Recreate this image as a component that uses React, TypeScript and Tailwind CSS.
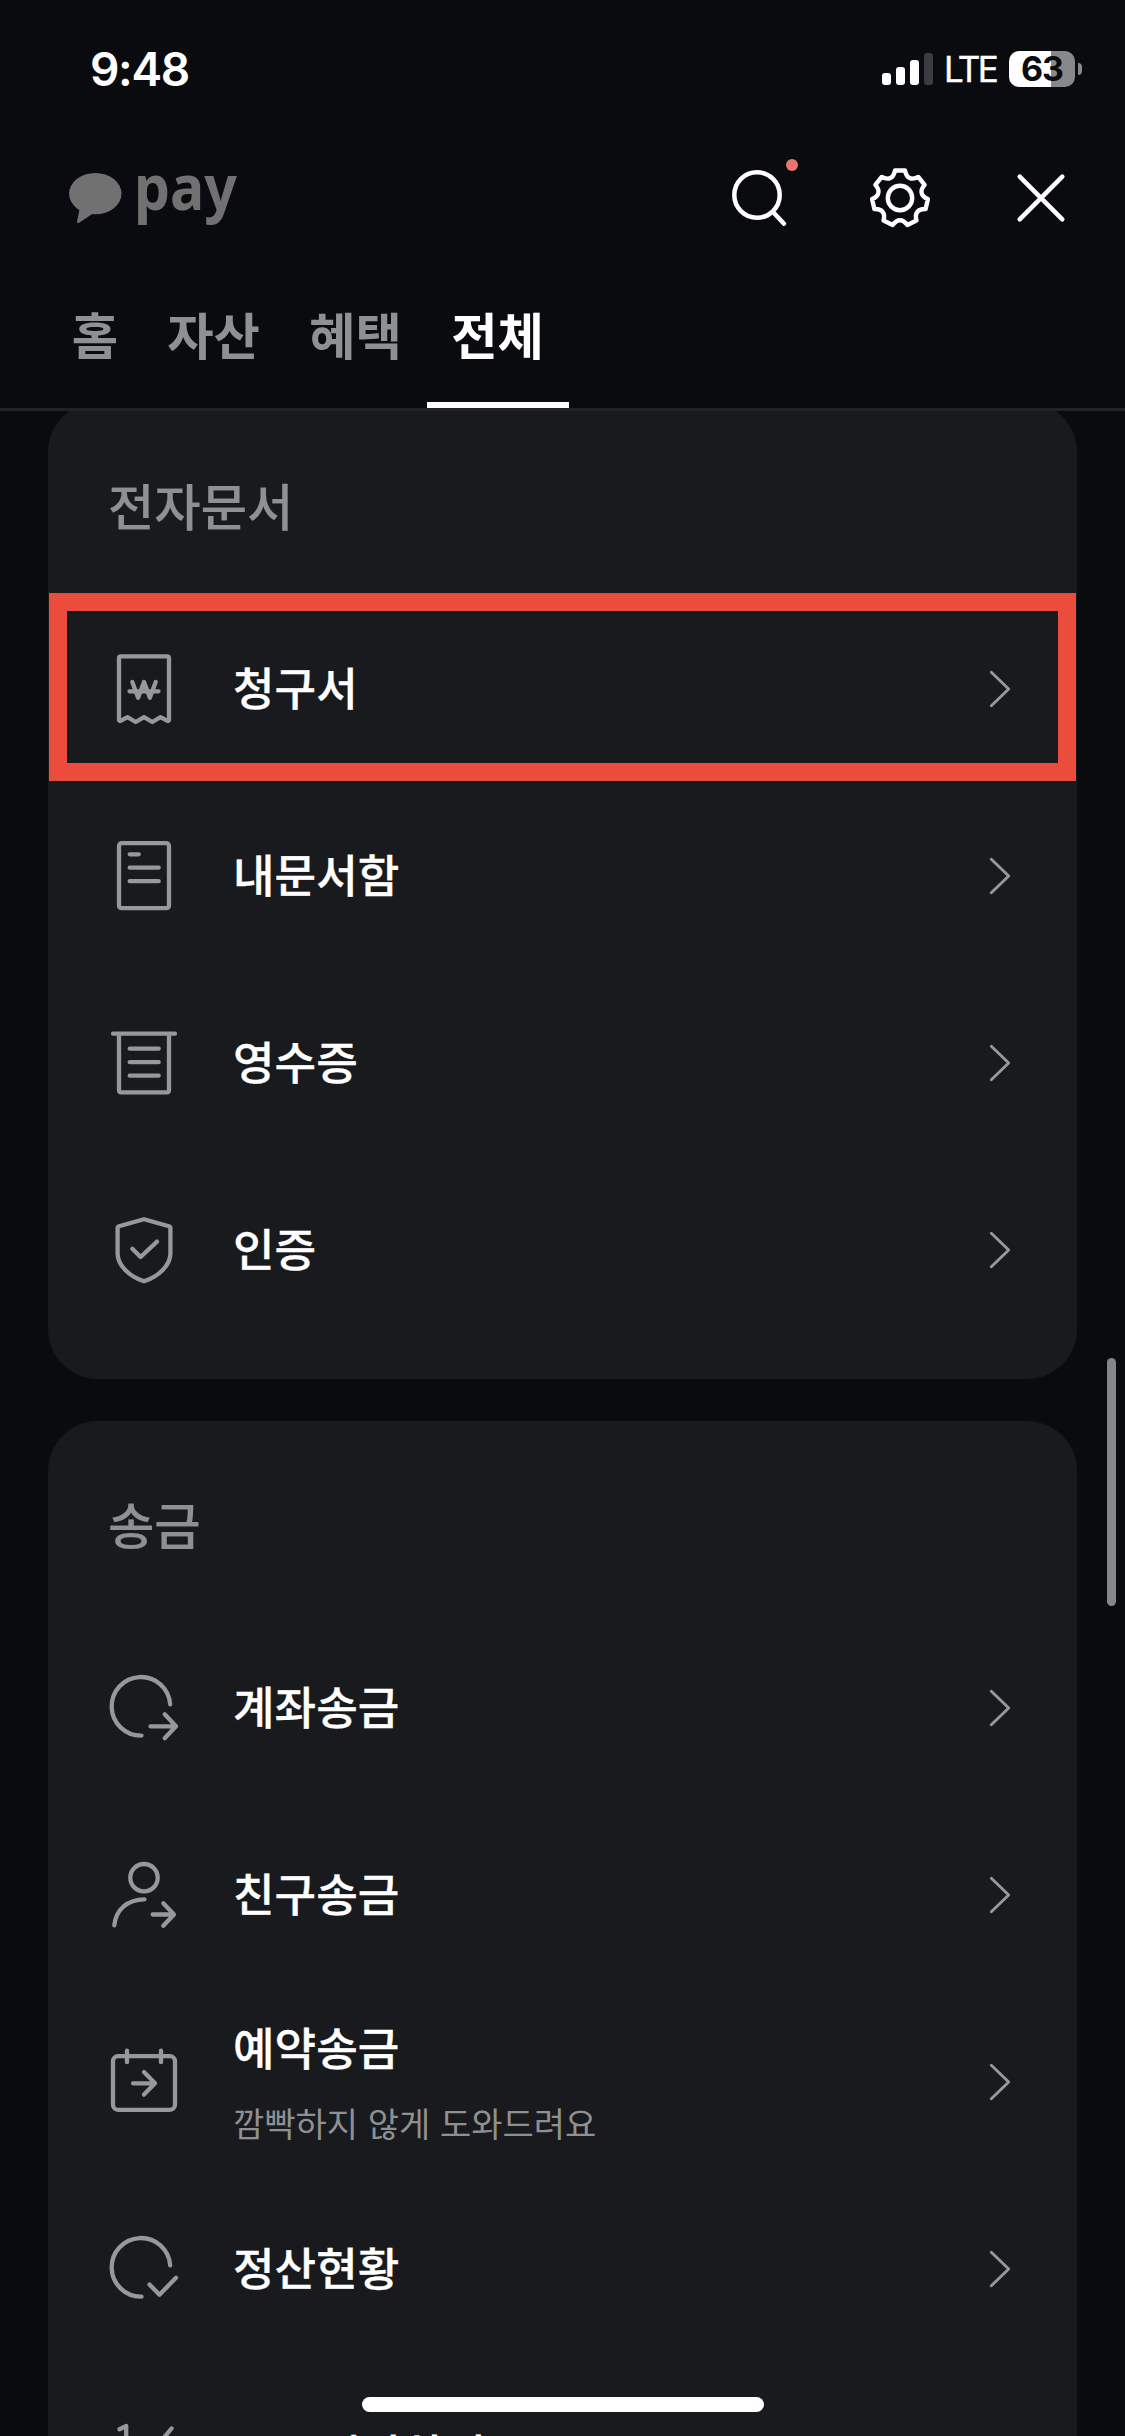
import type { ReactNode } from "react";

const kr = "font-['Noto_Sans_CJK_KR',sans-serif]";

/* Line icons share a 84x85 box whose origin is the middle of the row. */
function LineIcon({ children }: { children: ReactNode }) {
  return (
    <svg
      className="h-[85px] w-[84px] shrink-0"
      viewBox="-42 -43 84 85"
      fill="none"
      stroke="#97989a"
      strokeWidth="4.3"
      strokeLinecap="round"
      strokeLinejoin="round"
    >
      {children}
    </svg>
  );
}

const icons: Record<string, ReactNode> = {
  bill: (
    <>
      <path d="M-25 31V-30.7Q-25 -32.7 -23 -32.7H23Q25 -32.7 25 -30.7V31Q24.600 32.400 23 31.700L16.500 28.200L8.300 33L0 28.200L-8.300 33L-16.500 28.200L-23 31.700Q-24.600 32.400 -25 31Z" />
      <path d="M-11.700 -7L-5.900 8.700L0 -7L5.900 8.700L11.700 -7M-14.500 2.300H-8M14.500 2.300H8M-8 2.300H8" />
    </>
  ),
  doc: (
    <>
      <rect x="-25" y="-32.800" width="50" height="65" rx="2.800" />
      <path d="M-14.300 -21.700H-5.200M-14.300 -8.300H14.700M-14.300 5.200H14.700" />
    </>
  ),
  receipt: (
    <>
      <path d="M-31 -29.300H31M-25 -29V27.300Q-25 29.300 -23 29.300H23Q25 29.300 25 27.300V-29" />
      <path d="M-14.300 -14.300H14.700M-14.300 -0.800H14.700M-14.300 12.700H14.700" />
    </>
  ),
  shield: (
    <>
      <path d="M0 -30.800L25 -23.700Q26.400 -23.200 26.400 -21.800V3.500C26.400 15.500 14.500 26.500 0.800 31Q0 31.200 -0.800 31C-14.500 26.500 -26.400 15.500 -26.400 3.500V-21.800Q-26.400 -23.200 -25 -23.700Z" />
      <path d="M-11.700 -1.300L-3.400 7L13 -8.400" />
    </>
  ),
  send: (
    <g transform="translate(0 1)">
      <path d="M26.200 -4.700A29.300 29.300 0 1 0 -2.500 26.600" />
      <path d="M6.500 17.300H31.500M20.700 5.300L32 17.300L20.700 29.300" />
    </g>
  ),
  friend: (
    <g transform="translate(0 1)">
      <circle cx="0" cy="-18.300" r="13.700" />
      <path d="M0.500 3.300C-16.500 3.300 -28 13.500 -29.700 29.300" />
      <path d="M8.700 18.500H29.500M19.300 7.300L30 18.500L19.300 29.800" />
    </g>
  ),
  calendar: (
    <g transform="translate(0 1)">
      <rect x="-31" y="-26.800" width="62" height="53.600" rx="5" />
      <path d="M-17 -32.300V-20.800M17 -32.300V-20.800" />
      <path d="M-11 0.300H10M0 -11L11 0.300L0 11.600" />
    </g>
  ),
  settled: (
    <g transform="translate(0 1)">
      <path d="M26.200 -4.700A29.300 29.300 0 1 0 -2.500 26.600" />
      <path d="M5.500 14.500L15.500 24.700L32 7.700" />
    </g>
  ),
  split: <path d="M-24.500 -26.800L-17.800 -30V0M27.500 -27.500L-12 20" />,
};

type Item = { icon: string; label: string; note?: string; marked?: boolean };

const documents: Item[] = [
  { icon: "bill", label: "청구서", marked: true },
  { icon: "doc", label: "내문서함" },
  { icon: "receipt", label: "영수증" },
  { icon: "shield", label: "인증" },
];

const transfers: Item[] = [
  { icon: "send", label: "계좌송금" },
  { icon: "friend", label: "친구송금" },
  { icon: "calendar", label: "예약송금", note: "깜빡하지 않게 도와드려요" },
  { icon: "settled", label: "정산현황" },
  { icon: "split", label: "1/N 정산하기" },
];

function Row({ icon, label, note, marked }: Item) {
  return (
    <li className="relative flex h-[187px] items-center pr-[62px] pl-[54px]">
      <LineIcon>{icons[icon]}</LineIcon>
      <div className={`ml-[47px] flex flex-1 flex-col gap-[19px] ${note ? "" : "pb-1"}`}>
        <span className="text-[45.200px] leading-[64px] font-medium text-white [-webkit-text-stroke:0.3px_#fff]">
          {label}
        </span>
        {note && (
          <span className="text-[34px] leading-[50px] [word-spacing:2px] text-[#8f9092]">{note}</span>
        )}
      </div>
      <svg
        className="h-[41px] w-[30px] shrink-0"
        viewBox="-15 -21 30 41"
        fill="none"
        stroke="#97989a"
        strokeWidth="2.900"
        strokeLinecap="round"
        strokeLinejoin="round"
      >
        <path d="M-8.700 -16.700L8.700 0L-8.700 16.700" />
      </svg>
      {marked && (
        <div className="pointer-events-none absolute -top-[2px] right-px left-px h-[188px] border-[18px] border-[#eb4d3d]" />
      )}
    </li>
  );
}

function Card({ title, items }: { title: string; items: Item[] }) {
  return (
    <section className="rounded-[50px] bg-[#191a1d] pb-9">
      <h2 className="flex h-[193px] items-center px-[60px] pt-[13px] text-[50.400px] leading-none font-medium text-[#8f9092] [-webkit-text-stroke:0.2px_#8f9092]">
        {title}
      </h2>
      <ul>
        {items.map((item) => (
          <Row key={item.label} {...item} />
        ))}
      </ul>
    </section>
  );
}

function StatusBar() {
  return (
    <div className="flex h-[138px] items-center justify-between pr-[43px] pl-[90px] font-['Inter',sans-serif]">
      <span className="text-[46px] leading-none font-semibold tracking-[-1.300px] text-white">9:48</span>
      <div className="flex items-center">
        <div className="flex h-8 items-end gap-[5px]">
          <i className="h-3 w-[9px] rounded-[3px] bg-white" />
          <i className="h-[18px] w-[9px] rounded-[3px] bg-white" />
          <i className="h-[25px] w-[9px] rounded-[3px] bg-white" />
          <i className="h-8 w-[9px] rounded-[3px] bg-[#3b3c3f]" />
        </div>
        <span className="ml-[11px] w-[65px] text-[35px] leading-none tracking-[-2.600px] text-white [-webkit-text-stroke:0.4px_#fff]">
          LTE
        </span>
        <div className="flex h-9 w-[66px] items-center justify-center rounded-[10px] bg-linear-to-r from-white from-[64%] to-[#87888a] to-[64%] text-[34px] leading-none font-bold tracking-[-1px] text-[#0a0b0f]">
          63
        </div>
        <i className="ml-[3px] h-3 w-1 rounded-r-full bg-[#87888a]" />
      </div>
    </div>
  );
}

function polar(r: number, deg: number) {
  const a = (deg * Math.PI) / 180;
  return `${(r * Math.sin(a)).toFixed(2)} ${(-r * Math.cos(a)).toFixed(2)}`;
}

function gearPath() {
  const step = 360 / 7;
  let d = `M${polar(27.9, -10.5)}`;
  for (let i = 0; i < 7; i++) {
    const a = i * step;
    d += `L${polar(27.9, a + 10.5)}C${polar(20.8, a + 18)} ${polar(20.8, a + step - 18)} ${polar(27.9, a + step - 10.5)}`;
  }
  return d + "Z";
}

function TopBar() {
  return (
    <div className="flex h-[120px] items-center justify-between pr-12 pl-[66px]">
      <svg className="h-[120px] w-[180px] overflow-visible" viewBox="66 138 180 120" fill="#717171">
        <ellipse cx="95.300" cy="193.600" rx="26.200" ry="20.700" />
        <path d="M80 207L77 221.500Q77 224.300 79.500 222.500L93 213.500Z" />
        <text
          x="134"
          y="210"
          fontSize="62"
          fontWeight="700"
          textLength="103"
          lengthAdjust="spacingAndGlyphs"
          fontFamily="Noto Sans, sans-serif"
        >
          pay
        </text>
      </svg>
      <div className="flex items-center gap-[69px]">
        <svg className="h-[72px] w-[72px] overflow-visible" viewBox="-37 -38 72 72" fill="none" stroke="#fff" strokeWidth="4.500" strokeLinecap="round">
          <circle cx="-3" cy="-5" r="22.700" />
          <path d="M13 12L24 23.700" />
          <circle cx="32" cy="-35" r="6" fill="#ec736b" stroke="none" />
        </svg>
        <svg className="h-[72px] w-[72px]" viewBox="-36 -36 72 72" fill="none" stroke="#fff" strokeWidth="4.400" strokeLinejoin="round">
          <path d={gearPath()} />
          <circle r="12.200" />
        </svg>
        <svg className="h-[72px] w-[72px]" viewBox="-36 -36 72 72" fill="none" stroke="#fff" strokeWidth="4.500" strokeLinecap="round">
          <path d="M-21.300 -21.300L21.300 21.300M21.300 -21.300L-21.300 21.300" />
        </svg>
      </div>
    </div>
  );
}

function Tabs() {
  const base = "flex h-[150px] items-center justify-center border-b-6 pt-[9px] pr-px";
  return (
    <nav className="flex pl-[48px] text-[50.400px] leading-none font-bold text-[#8f9092]">
      <a className={`${base} w-[95px] border-transparent`}>홈</a>
      <a className={`${base} w-[142px] border-transparent`}>자산</a>
      <a className={`${base} w-[142px] border-transparent`}>혜택</a>
      <a className={`${base} w-[142px] border-white text-white`}>전체</a>
    </nav>
  );
}

export default function App() {
  return (
    <div className={`relative flex h-[2436px] w-[1125px] flex-col overflow-hidden bg-[#0a0b0f] ${kr}`}>
      <header className="relative z-10 h-[411px] shrink-0 border-b-3 border-[#222327] bg-[#0a0b0f]">
        <StatusBar />
        <TopBar />
        <Tabs />
      </header>
      <main className="-mt-[9px] flex flex-col gap-[42px] px-12">
        <Card title="전자문서" items={documents} />
        <Card title="송금" items={transfers} />
      </main>
      <div className="absolute top-[1358px] right-[9px] h-[248px] w-[9px] rounded-full bg-[#858688]" />
      <div className="absolute bottom-6 left-[362px] h-[15px] w-[402px] rounded-full bg-white" />
    </div>
  );
}
